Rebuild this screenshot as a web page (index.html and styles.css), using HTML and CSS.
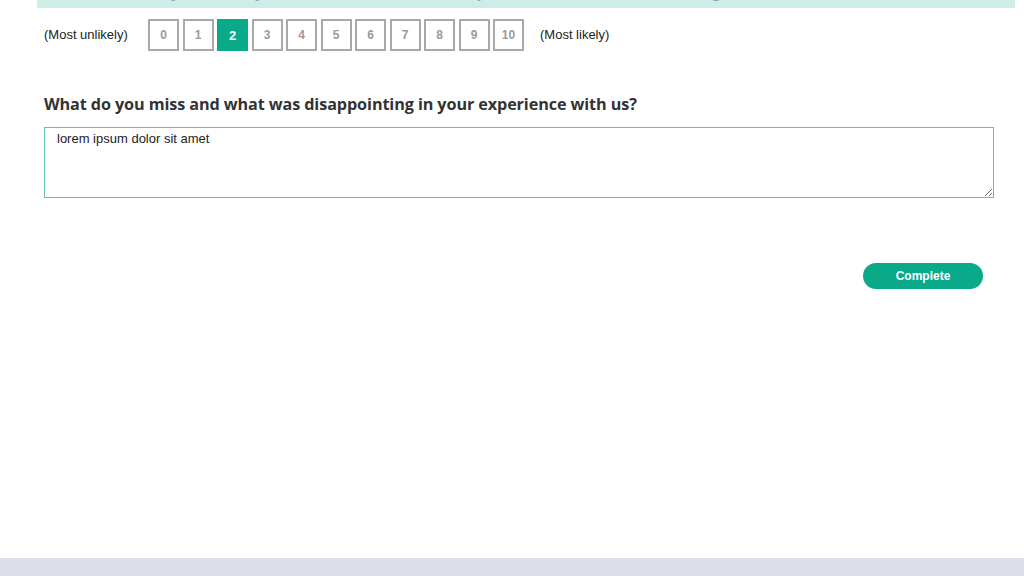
FILE: index.html
```html
<!DOCTYPE html>
<html lang="en">
<head>
<meta charset="utf-8">
<title>Survey</title>
<link rel="stylesheet" href="styles.css">
</head>
<body>
<div class="page">
  <main class="survey">
    <div class="banner"><p class="banner-text">How likely is it that you would recommend our products to a friend or colleague?</p></div>
    <div class="question">
      <div class="scale">
        <span class="scale-label">(Most unlikely)</span>
        <div class="options">
          <span class="opt">0</span>
          <span class="opt">1</span>
          <span class="opt selected">2</span>
          <span class="opt">3</span>
          <span class="opt">4</span>
          <span class="opt">5</span>
          <span class="opt">6</span>
          <span class="opt">7</span>
          <span class="opt">8</span>
          <span class="opt">9</span>
          <span class="opt">10</span>
        </div>
        <span class="scale-label end">(Most likely)</span>
      </div>
      <h2 class="q-title">What do you miss and what was disappointing in your experience with us?</h2>
      <textarea class="answer">lorem ipsum dolor sit amet</textarea>
      <div class="actions">
        <button class="btn-complete">Complete</button>
      </div>
    </div>
  </main>
  <footer class="footer"></footer>
</div>
</body>
</html>
```
FILE: styles.css
```css
* { box-sizing: border-box; }
html, body { margin: 0; padding: 0; background: #fff; }
body { font-family: "Liberation Sans", Arial, sans-serif; color: #222; }
.page { min-height: 576px; display: flex; flex-direction: column; }
.survey { flex: 1; padding: 0 9px 0 37px; }
.banner {
  background: #cdede7;
  height: 8px;
  overflow: hidden;
  padding: 0 0 0 60px;
}
.banner-text {
  margin: -17px 0 0;
  font-family: "Liberation Sans", Arial, sans-serif;
  font-size: 17px;
  font-weight: bold;
  line-height: 20px;
  color: #8fa9a4;
  white-space: nowrap;
}
.question { padding: 0 21px 0 7px; }
.scale { display: flex; align-items: center; margin-top: 11px; height: 32px; }
.scale-label { font-size: 13px; color: #222; width: 104px; line-height: 15px; margin-top: -2px; }
.scale-label.end { width: auto; margin-left: 16px; }
.options { display: flex; gap: 3.5px; }
.opt {
  width: 31px; height: 32px;
  border: 2px solid #a9a9a9;
  display: flex; align-items: center; justify-content: center;
  font-size: 12px; font-weight: bold; color: #9a9a9a;
  background: #fff;
}
.opt.selected { background: #0aa98a; border-color: #0aa98a; color: #fff; font-size: 13px; }
.q-title {
  font-family: "Open Sans", sans-serif;
  font-weight: 700;
  font-size: 16.2px;
  color: #333;
  margin: 41px 0 0;
  line-height: 24px;
  letter-spacing: -0.1px;
}
.answer {
  display: block;
  width: 950px;
  height: 71px;
  margin-top: 11px;
  border: 1px solid #5cc4b0;
  padding: 3px 12px;
  font-family: "Liberation Sans", Arial, sans-serif;
  font-size: 13px;
  color: #222;
  resize: vertical;
  outline: none;
}
.actions { display: flex; justify-content: flex-end; margin-top: 65px; padding-right: 11px; }
.btn-complete {
  width: 120px; height: 26px;
  border: none; border-radius: 13px;
  background: #0aa98a; color: #fff;
  font-family: "Liberation Sans", Arial, sans-serif;
  font-weight: bold; font-size: 12px;
  cursor: pointer;
}
.footer { height: 18px; background: #dcdeea; }
```
